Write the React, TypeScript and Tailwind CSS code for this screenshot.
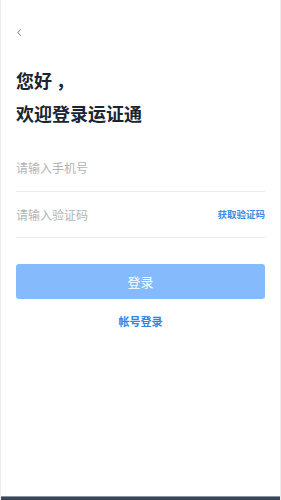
import React from 'react';

const font = { fontFamily: '"Noto Sans CJK SC", "Noto Sans", sans-serif' };

export default function App() {
  return (
    <div style={font} className="h-[500px] w-[281px] flex flex-col bg-white border-x border-[#ececec]">
      <div className="flex-1 px-[15px]">
        {/* back */}
        <div className="pt-[28px] h-[40px]">
          <svg width="7" height="9" viewBox="0 0 7 9" fill="none">
            <path d="M5 1 L1.8 4.5 L5 8" stroke="#9a9a9a" strokeWidth="1.1" />
          </svg>
        </div>

        <h1 className="mt-[28px] text-[18px] leading-[24px] font-bold text-[#1c2430]">您好 ，</h1>
        <h2 className="mt-[9px] text-[18px] leading-[24px] font-bold text-[#1c2430]">欢迎登录运证通</h2>

        <div className="mt-[20px]">
          <div className="h-[47px] flex items-center border-b border-[#ececec] text-[12px] text-[#b4b4b4]">
            请输入手机号
          </div>
          <div className="h-[46px] flex items-center justify-between border-b border-[#ececec]">
            <span className="text-[12px] text-[#b4b4b4]">请输入验证码</span>
            <span className="text-[9.5px] font-bold text-[#3a8ee6]">获取验证码</span>
          </div>
        </div>

        <button className="mt-[26px] w-full h-[35px] rounded-[3px] bg-[#85bbfd] text-white text-[13px]">
          登录
        </button>

        <div className="mt-[14px] text-center text-[11px] font-bold text-[#2f85e0]">帐号登录</div>
      </div>
      <div className="h-[4px] bg-[#3a4656] border-t border-[#8894a2]" />
    </div>
  );
}
